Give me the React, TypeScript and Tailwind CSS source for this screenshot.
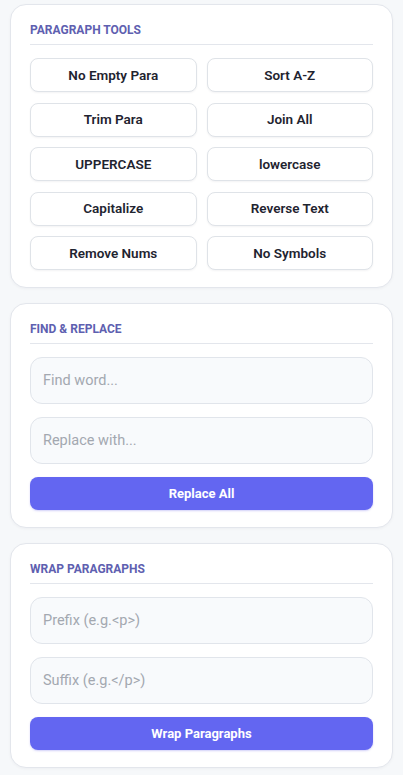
import React from "react";

const tools = [
  "No Empty Para",
  "Sort A-Z",
  "Trim Para",
  "Join All",
  "UPPERCASE",
  "lowercase",
  "Capitalize",
  "Reverse Text",
  "Remove Nums",
  "No Symbols",
];

function Card({ title, children }: { title: string; children: React.ReactNode }) {
  return (
    <section className="rounded-2xl border border-[#e3e6ec] bg-white px-[19px] pt-[17px] pb-[17px] shadow-[0_1px_3px_rgba(15,23,42,0.04)]">
      <h3 className="border-b border-[#e3e6ec] pb-[6px] text-[12px] font-bold uppercase leading-4 text-[#5e60b0]">
        {title}
      </h3>
      <div className="mt-[13px]">{children}</div>
    </section>
  );
}

function Field({ placeholder }: { placeholder: string }) {
  return (
    <input
      placeholder={placeholder}
      className="h-[47px] w-full rounded-xl border border-[#e1e5eb] bg-[#f8fafc] px-3 text-[14.5px] text-gray-800 outline-none placeholder:text-[#a3a8b0]"
    />
  );
}

function Primary({ label }: { label: string }) {
  return (
    <button className="h-[33px] w-full rounded-lg bg-[#6366f1] text-[13px] font-bold text-white shadow-[0_1px_2px_rgba(79,70,229,0.25)]">
      {label}
    </button>
  );
}

export default function App() {
  return (
    <div
      className="min-h-screen bg-[#f6f8fa] px-[10px] pt-[4px] pb-4"
      style={{ fontFamily: "Roboto, 'Liberation Sans', sans-serif" }}
    >
      <div className="flex flex-col gap-[15px]">
        <Card title="Paragraph Tools">
          <div className="grid grid-cols-2 gap-x-[10px] gap-y-[10.5px]">
            {tools.map((t) => (
              <button
                key={t}
                className="h-[34px] rounded-lg border border-[#dfe3e8] bg-white text-[13.5px] font-semibold text-[#1f2430] shadow-[0_1px_2px_rgba(15,23,42,0.05)]"
              >
                {t}
              </button>
            ))}
          </div>
        </Card>

        <Card title="Find & Replace">
          <div className="flex flex-col gap-[13px]">
            <Field placeholder="Find word..." />
            <Field placeholder="Replace with..." />
            <Primary label="Replace All" />
          </div>
        </Card>

        <Card title="Wrap Paragraphs">
          <div className="flex flex-col gap-[13px]">
            <Field placeholder="Prefix (e.g.<p>)" />
            <Field placeholder="Suffix (e.g.</p>)" />
            <Primary label="Wrap Paragraphs" />
          </div>
        </Card>
      </div>
    </div>
  );
}
